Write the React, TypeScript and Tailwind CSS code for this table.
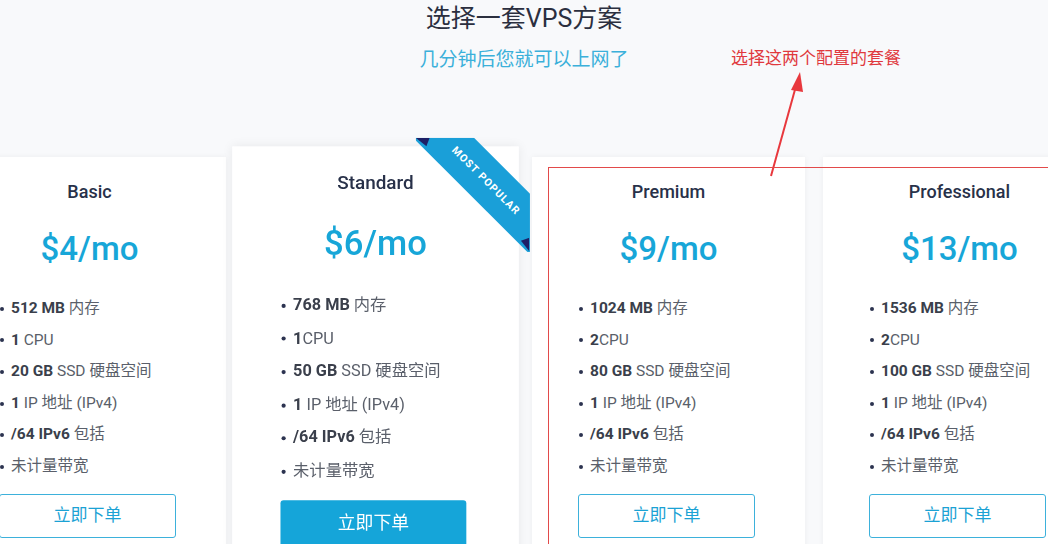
import * as React from 'react';

type Feature = { b: string; t: string };

const plans: { name: string; price: string; featured?: boolean; gap: string; features: Feature[] }[] = [
    {
        name: 'Basic',
        price: '$4/mo',
        gap: 'ml-[-47px]',
        features: [
            { b: '512 MB', t: ' 内存' },
            { b: '1', t: ' CPU' },
            { b: '20 GB', t: ' SSD 硬盘空间' },
            { b: '1', t: ' IP 地址 (IPv4)' },
            { b: '/64 IPv6', t: ' 包括' },
            { b: '', t: '未计量带宽' },
        ],
    },
    {
        name: 'Standard',
        price: '$6/mo',
        featured: true,
        gap: 'ml-[13px]',
        features: [
            { b: '768 MB', t: ' 内存' },
            { b: '1', t: 'CPU' },
            { b: '50 GB', t: ' SSD 硬盘空间' },
            { b: '1', t: ' IP 地址 (IPv4)' },
            { b: '/64 IPv6', t: ' 包括' },
            { b: '', t: '未计量带宽' },
        ],
    },
    {
        name: 'Premium',
        price: '$9/mo',
        gap: 'ml-[20px]',
        features: [
            { b: '1024 MB', t: ' 内存' },
            { b: '2', t: 'CPU' },
            { b: '80 GB', t: ' SSD 硬盘空间' },
            { b: '1', t: ' IP 地址 (IPv4)' },
            { b: '/64 IPv6', t: ' 包括' },
            { b: '', t: '未计量带宽' },
        ],
    },
    {
        name: 'Professional',
        price: '$13/mo',
        gap: 'ml-[18px]',
        features: [
            { b: '1536 MB', t: ' 内存' },
            { b: '2', t: 'CPU' },
            { b: '100 GB', t: ' SSD 硬盘空间' },
            { b: '1', t: ' IP 地址 (IPv4)' },
            { b: '/64 IPv6', t: ' 包括' },
            { b: '', t: '未计量带宽' },
        ],
    },
];

function Ribbon() {
    return (
        <div className="absolute top-[-8px] right-[-10px] w-[108px] h-[108px] overflow-hidden">
            <div className="absolute left-[-18px] top-[20px] w-[170px] h-[41px] rotate-45 bg-[#1a9fd8] flex items-center justify-center text-[10px] font-bold tracking-[1px] text-white">
                MOST POPULAR
            </div>
            <svg className="absolute inset-0" width="108" height="108">
                <polygon points="0,0 13,0 10,8" fill="#1d1f66" />
                <polygon points="108,108 108,95 100,98" fill="#1d1f66" />
            </svg>
        </div>
    );
}

function Card({ plan }: { plan: (typeof plans)[number] }) {
    return (
        <div
            className={
                'relative shrink-0 w-[273px] h-[426px] bg-white ' +
                plan.gap +
                (plan.featured ? ' scale-105 z-10 shadow-[0_0_10px_rgba(0,0,0,0.07)]' : ' shadow-[0_0_6px_rgba(0,0,0,0.05)]')
            }
        >
            {plan.featured && <Ribbon />}
            <div className="pt-[23px] text-center text-[18px] leading-[24px] font-medium text-[#283149]">{plan.name}</div>
            <div className="mt-[25px] text-center text-[33px] leading-[40px] font-medium text-[#17a6d8]">{plan.price}</div>
            <ul className="mt-[24px] pl-[47px]">
                {plan.features.map((f, i) => (
                    <li key={i} className="flex items-center leading-[31.6px] text-[15.5px] text-[#5a5f6a]">
                        <span className="w-[4px] h-[4px] rounded-full bg-[#2c3350] mr-[7px]" />
                        {f.b && <span className="font-bold text-[#3a3f4b]">{f.b}</span>}
                        <span className="whitespace-pre">{f.t}</span>
                    </li>
                ))}
            </ul>
            <div className="mt-[11px] pl-[46px]">
                <button
                    className={
                        'w-[177px] h-[44px] rounded-[3px] text-[17px] ' +
                        (plan.featured
                            ? 'bg-[#15a5d9] text-white'
                            : 'border border-[#3db1db] text-[#1ba2d4] bg-white')
                    }
                >
                    立即下单
                </button>
            </div>
        </div>
    );
}

export default function App() {
    return (
        <div
            className="relative w-[1048px] h-[544px] overflow-hidden bg-[#f8f9fb]"
            style={{ fontFamily: 'Roboto, "Noto Sans CJK SC", sans-serif' }}
        >
            <div className="flex flex-col items-center pt-[1px]">
                <h2 className="text-[25px] leading-[35px] text-[#2b2f3f]">选择一套VPS方案</h2>
                <p className="mt-[10px] text-[19px] leading-[27px] text-[#3bb0da]">几分钟后您就可以上网了</p>
            </div>

            <div className="mt-[84px] flex items-start">
                {plans.map((p) => (
                    <Card key={p.name} plan={p} />
                ))}
            </div>

            {/* annotation */}
            <div className="absolute left-[731px] top-[46px] text-[17px] leading-[24px] text-[#e0393e]">选择这两个配置的套餐</div>
            <svg className="absolute left-0 top-0 z-20" width="1048" height="544">
                <line x1="771" y1="176" x2="796" y2="86" stroke="#e8383d" strokeWidth="2" />
                <polygon points="800,72 791,90 803,92" fill="#e8383d" />
            </svg>
            <div className="absolute left-[548px] top-[167px] w-[520px] h-[420px] border border-[#e24a4a] z-20" />
        </div>
    );
}
